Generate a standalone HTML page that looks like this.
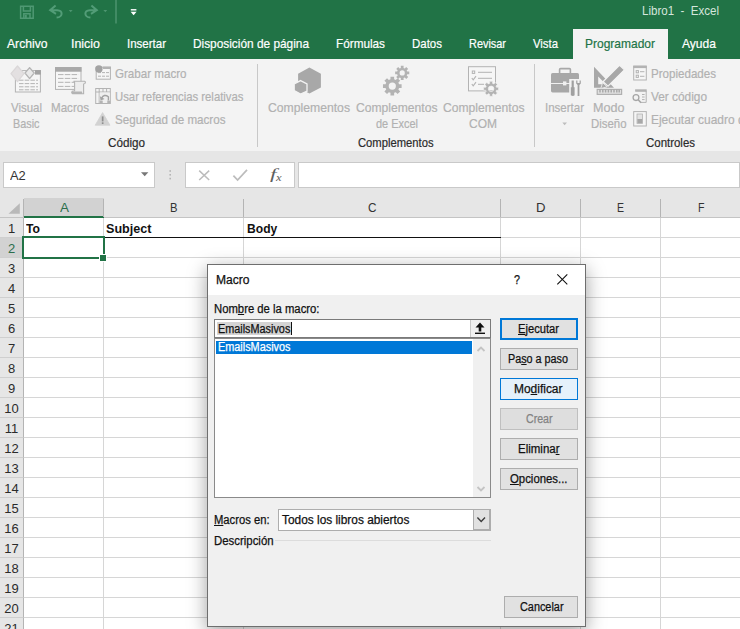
<!DOCTYPE html>
<html lang="es">
<head>
<meta charset="utf-8">
<title>Libro1 - Excel</title>
<style>
*{box-sizing:border-box;margin:0;padding:0}
html,body{width:740px;height:629px;overflow:hidden;background:#fff}
body{font-family:"Liberation Sans",sans-serif;font-size:12px;color:#222;position:relative}
.abs{position:absolute;white-space:nowrap;transform-origin:0 0}
svg{position:absolute;overflow:visible}
#top{left:0;top:0;width:740px;height:59px;background:#217346}
.tab{color:#fff;font-size:13px;top:36.4px;-webkit-text-stroke:0.2px currentColor}
#ptab{left:573px;top:29px;width:95px;height:30px;background:#f3f3f3}
#ribbon{left:0;top:59px;width:740px;height:92px;background:#f3f3f3}
#band{left:0;top:151px;width:740px;height:47px;background:#e6e6e6}
.gl{color:#b1b1b1;font-size:13px;-webkit-text-stroke:0.2px currentColor}
.gt{color:#2b2b2b;font-size:12px;top:136.1px;-webkit-text-stroke:0.2px currentColor}
.sep{width:1px;background:#c8c8c8;top:64px;height:83px}
.box{background:#fff;border:1px solid #c9c9c9}
#sheet{left:0;top:198px;width:740px;height:431px;background:#fff}
.ch{top:198px;height:20px;background:#e6e6e6;border-bottom:1px solid #c4c4c4}
.chs{top:199px;width:1px;height:18px;background:#b4b4b4}
.cl{top:200.2px;font-size:13px;color:#333}
.rh{left:0;width:24px;height:20px;background:#e6e6e6;border-right:1px solid #b4b4b4;border-bottom:1px solid #cfcfcf;text-align:center;font-size:13px;color:#2b2b2b;line-height:21px}
.rh span{display:inline-block}
.rsel{background:#d2d2d2;color:#2c6e4c}
.vl{width:1px;background:#d6d6d6;top:218px;height:411px}
.hl{height:1px;background:#d6d6d6;left:24px;width:716px}
.cell{font-weight:bold;font-size:13px;color:#111;top:221.2px}
#dlg{left:207px;top:264px;width:379px;height:363px;background:#f0f0f0;border:1px solid #6e6e6e;box-shadow:0 5px 18px rgba(0,0,0,.38)}
#dtitle{left:208px;top:265px;width:377px;height:30px;background:#fff}
.dt{font-size:12px;color:#111;-webkit-text-stroke:0.25px currentColor}
.btn{left:500px;width:78px;height:22px;background:#e1e1e1;border:1px solid #adadad}
.bt{font-size:12px;color:#111;-webkit-text-stroke:0.25px currentColor}
</style>
</head>
<body>
<div id="top" class="abs"></div>
<div id="ptab" class="abs"></div>
<div class="abs" style="left:642px;top:3.2px;color:#d5e6dc;font-size:13px;--w:77px;transform:scaleX(0.8881)">Libro1&nbsp; -&nbsp; Excel</div>
<div class="abs tab" style="left:7px;--w:40.5px;transform:scaleX(0.9341)">Archivo</div>
<div class="abs tab" style="left:71px;--w:29px;transform:scaleX(0.9552)">Inicio</div>
<div class="abs tab" style="left:127px;--w:39px;transform:scaleX(0.8848)">Insertar</div>
<div class="abs tab" style="left:193px;--w:116px;transform:scaleX(0.9119)">Disposición de página</div>
<div class="abs tab" style="left:336px;--w:49px;transform:scaleX(0.9043)">Fórmulas</div>
<div class="abs tab" style="left:412px;--w:30px;transform:scaleX(0.8832)">Datos</div>
<div class="abs tab" style="left:469px;--w:37px;transform:scaleX(0.8394)">Revisar</div>
<div class="abs tab" style="left:533px;--w:25px;transform:scaleX(0.8719)">Vista</div>
<div class="abs tab" style="left:585px;color:#217346;--w:70px;transform:scaleX(0.9226)">Programador</div>
<div class="abs tab" style="left:682px;--w:34px;transform:scaleX(0.9279)">Ayuda</div>

<div id="ribbon" class="abs"></div>
<div id="band" class="abs"></div>
<svg style="left:0;top:0" width="740" height="160" viewBox="0 0 740 160">
<g fill="none" stroke="#4f9873" stroke-width="1.5"><path d="M20.6 6.3H33.2V18.2H20.6Z"/><path d="M23.4 6.3V11H30.4V6.3"/><path d="M23.8 18.2V13.8H30V18.2"/></g><rect x="24.8" y="14.8" width="2" height="3.2" fill="#4f9873"/>
<path d="M55.6 5.6L50.2 10.2L56 13.8M50.8 10.2H57.2Q61.8 10.4 61.6 14Q61.2 17.2 56.6 17.6" fill="none" stroke="#529c77" stroke-width="2"/><path d="M68.8 10H72.6L70.7 12.3Z" fill="#4d9570"/>
<path d="M91.4 5.6L96.8 10.2L91 13.8M96.2 10.2H89.8Q85.2 10.4 85.4 14Q85.8 17.2 90.4 17.6" fill="none" stroke="#529c77" stroke-width="2"/><path d="M103.4 10H107.2L105.3 12.3Z" fill="#4d9570"/>
<rect x="115.5" y="0" width="1" height="23.5" fill="#63a381"/>
<rect x="130.8" y="9.1" width="5.6" height="1.4" fill="#fff"/><path d="M130.6 11.8H136.6L133.6 15.2Z" fill="#fff"/>
<rect x="15.4" y="70.6" width="25" height="21.4" fill="#f6f6f6" stroke="#b3b3b3" stroke-width="1"/>
<rect x="35" y="70.1" width="5.9" height="4.5" fill="#a3a3a3"/>
<path d="M19 80.2H38" stroke="#b3b3b3" stroke-width="1" stroke-dasharray="4.5 1.2"/>
<path d="M19 83.6H38" stroke="#b3b3b3" stroke-width="1" stroke-dasharray="4.5 1.2"/>
<path d="M19 86.8H38" stroke="#b3b3b3" stroke-width="1" stroke-dasharray="4.5 1.2"/>
<path d="M19 89.8H38" stroke="#b3b3b3" stroke-width="1" stroke-dasharray="4.5 1.2"/>
<path d="M17.5 66L24 73.6L17.5 81.6L11 73.6Z" fill="#e3e0e1" stroke="#dad7d8" stroke-width="1.2" stroke-linejoin="round"/>
<path d="M29.6 67.6L34.2 73L29.6 78.6L25 73Z" fill="#e9e9e9" stroke="#b4b4b4" stroke-width="1.3" stroke-linejoin="round"/>
<rect x="55.5" y="67.6" width="25.5" height="21.8" fill="#f6f6f6" stroke="#b3b3b3" stroke-width="1"/>
<rect x="55" y="67.1" width="26.5" height="4.6" fill="#a9a9a9"/>
<path d="M58 74.6H78.5" stroke="#b3b3b3" stroke-width="1" stroke-dasharray="5.5 1.3"/>
<path d="M58 78.4H78.5" stroke="#b3b3b3" stroke-width="1" stroke-dasharray="5.5 1.3"/>
<path d="M58 82.3H78.5" stroke="#b3b3b3" stroke-width="1" stroke-dasharray="5.5 1.3"/>
<path d="M58 86.4H78.5" stroke="#b3b3b3" stroke-width="1" stroke-dasharray="5.5 1.3"/>
<path d="M73.5 81.3H84.6Q86 82 85 83.4L83.6 84V93.8H72.6Q71 93 72.2 91.2L74.6 90.8V82.4Q74.2 81.5 73.5 81.3Z" fill="#ededed" stroke="#b3b3b3" stroke-width="1.1"/>
<path d="M72.2 91.4H81.8Q82.8 92.6 81.8 93.9H72.4Q71.2 92.6 72.2 91.4Z" fill="#b3b3b3"/>
<rect x="96.2" y="67.2" width="14.2" height="12" fill="#f6f6f6" stroke="#b3b3b3" stroke-width="1"/>
<rect x="103" y="66.6" width="7.9" height="2.4" fill="#b3b3b3"/>
<path d="M98 72.6H109.5" stroke="#b3b3b3" stroke-width="1" stroke-dasharray="3 1"/>
<path d="M98 76.2H109.5" stroke="#b3b3b3" stroke-width="1" stroke-dasharray="3 1"/>
<circle cx="98.9" cy="68.9" r="3.7" fill="#a3a3a3"/>
<g fill="none" stroke="#b3b3b3" stroke-width="1"><rect x="95.7" y="88.5" width="14.6" height="15"/><path d="M95.7 92H110.3M99.2 88.5V103.5M103 88.5V92M106.6 88.5V92"/></g>
<rect x="99.7" y="92.5" width="10.1" height="10.5" fill="#efefef"/>
<path d="M101.4 98.6Q104 93.4 108.4 96.8V100.5" fill="none" stroke="#a3a3a3" stroke-width="1.4"/><path d="M99.9 96.2L100.6 100.6L104.6 99Z" fill="#a3a3a3"/>
<rect x="99.7" y="100.6" width="3" height="2.9" fill="#b3b3b3"/><rect x="107.3" y="100.6" width="3" height="2.9" fill="#b3b3b3"/>
<path d="M102.6 112.6L110 125.2H95.2Z" fill="#d2d2d2" stroke="#d2d2d2" stroke-width="0.8" stroke-linejoin="round"/><rect x="101.8" y="116.4" width="1.7" height="5" fill="#8f8f8f"/><rect x="101.8" y="122.3" width="1.7" height="1.7" fill="#8f8f8f"/>
<path d="M309.4 67.4L320.9 73.7V87.5L309.4 93.4L298.1 87.5V73.7Z" fill="#a8a8a8"/>
<path d="M300.6 80.6L307 84V91.2L300.6 94L294.2 90.6V84Z" fill="#a8a8a8" stroke="#f3f3f3" stroke-width="1.3"/>
<path fill-rule="evenodd" fill="#b3b3b3" d="M399.06 84.27L401.62 84.25L401.62 87.95L399.06 87.93L398.37 89.58L400.20 91.38L397.58 94.00L395.78 92.17L394.13 92.86L394.15 95.42L390.45 95.42L390.47 92.86L388.82 92.17L387.02 94.00L384.40 91.38L386.23 89.58L385.54 87.93L382.98 87.95L382.98 84.25L385.54 84.27L386.23 82.62L384.40 80.82L387.02 78.20L388.82 80.03L390.47 79.34L390.45 76.78L394.15 76.78L394.13 79.34L395.78 80.03L397.58 78.20L400.20 80.82L398.37 82.62ZM388.70 86.10a3.60 3.60 0 1 0 7.20 0a3.60 3.60 0 1 0 -7.20 0Z"/>
<path fill-rule="evenodd" fill="#b3b3b3" d="M407.22 71.54L409.26 71.50L409.26 74.30L407.22 74.26L406.71 75.49L408.19 76.90L406.20 78.89L404.79 77.41L403.56 77.92L403.60 79.96L400.80 79.96L400.84 77.92L399.61 77.41L398.20 78.89L396.21 76.90L397.69 75.49L397.18 74.26L395.14 74.30L395.14 71.50L397.18 71.54L397.69 70.31L396.21 68.90L398.20 66.91L399.61 68.39L400.84 67.88L400.80 65.84L403.60 65.84L403.56 67.88L404.79 68.39L406.20 66.91L408.19 68.90L406.71 70.31ZM399.60 72.90a2.60 2.60 0 1 0 5.20 0a2.60 2.60 0 1 0 -5.20 0Z"/>
<rect x="468.5" y="66.7" width="27" height="24.2" fill="#f6f6f6" stroke="#b3b3b3" stroke-width="1"/>
<g fill="none" stroke="#b3b3b3" stroke-width="1"><rect x="472.3" y="71" width="2.4" height="2.4"/><path d="M478 72.3H492M478 78.3H492M478 84.3H484"/><path d="M471.8 78L473.2 79.8L476 76.2M471.8 84L473.2 85.8L476 82.2" stroke-width="1.1"/></g>
<path fill-rule="evenodd" fill="#b3b3b3" stroke="#f3f3f3" stroke-width="0.6" d="M496.50 87.33L498.55 87.32L498.55 90.28L496.50 90.27L495.96 91.58L497.42 93.02L495.32 95.12L493.88 93.66L492.57 94.20L492.58 96.25L489.62 96.25L489.63 94.20L488.32 93.66L486.88 95.12L484.78 93.02L486.24 91.58L485.70 90.27L483.65 90.28L483.65 87.32L485.70 87.33L486.24 86.02L484.78 84.58L486.88 82.48L488.32 83.94L489.63 83.40L489.62 81.35L492.58 81.35L492.57 83.40L493.88 83.94L495.32 82.48L497.42 84.58L495.96 86.02ZM488.30 88.80a2.80 2.80 0 1 0 5.60 0a2.80 2.80 0 1 0 -5.60 0Z"/>
<path d="M559.6 73V69.6Q559.6 68.6 560.6 68.6H569.4Q570.4 68.6 570.4 69.6V73" fill="none" stroke="#a8a8a8" stroke-width="1.6"/>
<path d="M552.6 73H577.4Q579 73 579 74.6V90.8Q579 92.4 577.4 92.4H552.6Q551 92.4 551 90.8V74.6Q551 73 552.6 73Z" fill="#a8a8a8"/>
<rect x="551" y="83" width="28" height="1" fill="#f0f0f0"/><rect x="563" y="81.4" width="3.4" height="4" fill="#f0f0f0"/>
<rect x="569.2" y="79" width="13" height="18" fill="#f3f3f3"/>
<path d="M571.6 80.6H573.8V87.2H574.6V95.2Q573.2 96.6 570.8 95.2V87.2H571.6Z" fill="#a0a0a0"/>
<path d="M576.2 80.4V83.4L577.6 85V96H579.4V85L580.8 83.4V80.4H579.6V83H577.4V80.4Z" fill="#a0a0a0"/>
<path d="M562.3 122.6H567L564.65 125.2Z" fill="#bdbdbd"/>
<path fill-rule="evenodd" d="M594 66.8L614 87.8H594ZM598.2 76.4V84.2H605.8Z" fill="#a8a8a8"/>
<path d="M619.6 65.2L624.4 69.8L608 86.2L603.2 81.6Z" fill="#a8a8a8" stroke="#f3f3f3" stroke-width="1.2"/>
<path d="M602.6 82.6L607 86.8L600.8 88.6Z" fill="#a8a8a8" stroke="#f3f3f3" stroke-width="0.8"/>
<rect x="597.2" y="89.4" width="24.4" height="5" fill="#e0e0e0" stroke="#b0b0b0" stroke-width="1.2"/>
<path d="M600 89.6V92.6M602.8 89.6V92.6M605.6 89.6V92.6M608.4 89.6V92.6M611.2 89.6V92.6M614 89.6V92.6M616.8 89.6V92.6M619.2 89.6V92.6" stroke="#a8a8a8" stroke-width="1.5"/>
<rect x="633.7" y="66.2" width="12.6" height="13.8" fill="#f6f6f6" stroke="#b3b3b3" stroke-width="1"/><rect x="633.2" y="65.7" width="13.6" height="2.4" fill="#b3b3b3"/>
<g fill="none" stroke="#b3b3b3" stroke-width="1"><rect x="636.2" y="70.6" width="2.2" height="2.2"/><rect x="636.2" y="75.2" width="2.2" height="2.2"/><path d="M640 71.7H644.4M640 76.3H644.4"/></g>
<path d="M635.6 91H646.2V102.4H641" fill="none" stroke="#b3b3b3" stroke-width="1"/><rect x="635.1" y="89.3" width="11.6" height="2.3" fill="#b3b3b3"/><path d="M642 94.5H644.6M642 97H644.6M642 99.6H644.6" stroke="#b3b3b3" stroke-width="1"/>
<circle cx="636" cy="97.6" r="2.9" fill="#f3f3f3" stroke="#a6a6a6" stroke-width="1.3"/><path d="M638.2 99.8L641 102.8" stroke="#a6a6a6" stroke-width="1.6"/>
<rect x="633.7" y="111.6" width="12.6" height="14.4" fill="#f6f6f6" stroke="#b3b3b3" stroke-width="1"/><rect x="637" y="114" width="5.6" height="9.4" fill="#e3e3e3" stroke="#b3b3b3" stroke-width="0.8"/><rect x="637.4" y="119" width="4.8" height="4" fill="#a8a8a8"/>
</svg>

<div class="abs gl" style="left:11px;top:100px;--w:31px;transform:scaleX(0.8810)">Visual</div>
<div class="abs gl" style="left:13px;top:116.2px;--w:26.5px;transform:scaleX(0.8334)">Basic</div>
<div class="abs gl" style="left:51px;top:100px;--w:38px;transform:scaleX(0.8915)">Macros</div>
<div class="abs gl" style="left:114.5px;top:66.2px;--w:71.5px;transform:scaleX(0.8915)">Grabar macro</div>
<div class="abs gl" style="left:114.5px;top:89.2px;--w:128.5px;transform:scaleX(0.8718)">Usar referencias relativas</div>
<div class="abs gl" style="left:114.5px;top:112.2px;--w:110.5px;transform:scaleX(0.8942)">Seguridad de macros</div>
<div class="abs gt" style="left:108px;--w:37px;transform:scaleX(0.9729)">Código</div>
<div class="abs sep" style="left:257px"></div>
<div class="abs gl" style="left:268px;top:100px;--w:82px;transform:scaleX(0.9378)">Complementos</div>
<div class="abs gl" style="left:355.5px;top:100px;--w:81.5px;transform:scaleX(0.9321)">Complementos</div>
<div class="abs gl" style="left:375.5px;top:116.2px;--w:42px;transform:scaleX(0.8421)">de Excel</div>
<div class="abs gl" style="left:442.5px;top:100px;--w:81.5px;transform:scaleX(0.9321)">Complementos</div>
<div class="abs gl" style="left:469px;top:116.2px;--w:28px;transform:scaleX(0.9228)">COM</div>
<div class="abs gt" style="left:357.5px;--w:75.5px;transform:scaleX(0.9355)">Complementos</div>
<div class="abs sep" style="left:534px"></div>
<div class="abs gl" style="left:545px;top:100px;--w:39px;transform:scaleX(0.8848)">Insertar</div>
<div class="abs gl" style="left:592.5px;top:100px;--w:31.5px;transform:scaleX(0.9683)">Modo</div>
<div class="abs gl" style="left:590.5px;top:116.2px;--w:35.5px;transform:scaleX(0.8772)">Diseño</div>
<div class="abs gl" style="left:651px;top:66.2px;--w:65px;transform:scaleX(0.8904)">Propiedades</div>
<div class="abs gl" style="left:651px;top:89.2px;--w:56px;transform:scaleX(0.9115)">Ver código</div>
<div class="abs gl" style="left:651px;top:112.2px;--w:142px;transform:scaleX(0.9181)">Ejecutar cuadro de diálogo</div>
<div class="abs gt" style="left:645.5px;--w:49px;transform:scaleX(0.9541)">Controles</div>

<!-- formula bar -->
<div class="abs box" style="left:3px;top:162px;width:152px;height:26px"></div>
<div class="abs" style="left:10px;top:167.7px;font-size:13px;color:#333;--w:15.75px;transform:scaleX(0.9902)">A2</div>
<div class="abs box" style="left:185px;top:162px;width:110px;height:26px"></div>
<div class="abs box" style="left:298px;top:162px;width:442px;height:26px"></div>
<svg style="left:0;top:150px" width="320" height="70" viewBox="0 150 320 70">
<path d="M141 172.2H148.4L144.7 176.2Z" fill="#777"/>
<rect x="169.4" y="170.2" width="1.6" height="1.6" fill="#b5b5b5"/><rect x="169.4" y="174" width="1.6" height="1.6" fill="#b5b5b5"/><rect x="169.4" y="177.8" width="1.6" height="1.6" fill="#b5b5b5"/>
<path d="M199.2 170.6L209.2 180M209.2 170.6L199.2 180" stroke="#bcbcbc" stroke-width="1.5" fill="none"/>
<path d="M233.4 175.6L237.6 180L247 169.8" stroke="#bcbcbc" stroke-width="1.7" fill="none"/>
</svg>
<div class="abs" style="left:270px;top:165.6px;font-family:'Liberation Serif',serif;font-style:italic;font-size:15px;color:#5e5e5e;--w:6.5px;transform:scaleX(1.5581)">f</div>
<div class="abs" style="left:276.2px;top:171.6px;font-family:'Liberation Serif',serif;font-style:italic;font-size:10px;color:#5e5e5e;--w:5.6px;transform:scaleX(1.2575)">x</div>

<!-- sheet -->
<div id="sheet" class="abs"></div>
<div class="abs ch" style="left:0;width:740px"></div>
<div class="abs" style="left:24px;top:198px;width:80px;height:20px;background:#d2d2d2;border-bottom:2px solid #217346"></div>
<svg style="left:8px;top:203px" width="12" height="11" viewBox="0 0 12 11"><path d="M0.5 10.8H11.8V0.3Z" fill="#b9b9b9"/></svg>
<div class="abs chs" style="left:23px"></div>
<div class="abs chs" style="left:103px"></div>
<div class="abs chs" style="left:243px"></div>
<div class="abs chs" style="left:500px"></div>
<div class="abs chs" style="left:580px"></div>
<div class="abs chs" style="left:660px"></div>
<div class="abs cl" style="left:59.5px;color:#2c6e4c;--w:9px;transform:scaleX(1.0378)">A</div>
<div class="abs cl" style="left:169.5px;--w:7.5px;transform:scaleX(0.8649)">B</div>
<div class="abs cl" style="left:367.5px;--w:8.5px;transform:scaleX(0.9052)">C</div>
<div class="abs cl" style="left:535.5px;--w:9.5px;transform:scaleX(1.0116)">D</div>
<div class="abs cl" style="left:616.5px;--w:7px;transform:scaleX(0.8072)">E</div>
<div class="abs cl" style="left:697.5px;--w:6.5px;transform:scaleX(0.8173)">F</div>
<div class="abs rh" style="top:218px"><span>1</span></div>
<div class="abs rh rsel" style="top:238px"><span>2</span></div>
<div class="abs rh" style="top:258px"><span>3</span></div>
<div class="abs rh" style="top:278px"><span>4</span></div>
<div class="abs rh" style="top:298px"><span>5</span></div>
<div class="abs rh" style="top:318px"><span>6</span></div>
<div class="abs rh" style="top:338px"><span>7</span></div>
<div class="abs rh" style="top:358px"><span>8</span></div>
<div class="abs rh" style="top:378px"><span>9</span></div>
<div class="abs rh" style="top:398px"><span>10</span></div>
<div class="abs rh" style="top:418px"><span>11</span></div>
<div class="abs rh" style="top:438px"><span>12</span></div>
<div class="abs rh" style="top:458px"><span>13</span></div>
<div class="abs rh" style="top:478px"><span>14</span></div>
<div class="abs rh" style="top:498px"><span>15</span></div>
<div class="abs rh" style="top:518px"><span>16</span></div>
<div class="abs rh" style="top:538px"><span>17</span></div>
<div class="abs rh" style="top:558px"><span>18</span></div>
<div class="abs rh" style="top:578px"><span>19</span></div>
<div class="abs rh" style="top:598px"><span>20</span></div>
<div class="abs rh" style="top:618px"><span>21</span></div>
<div class="abs hl" style="top:237px"></div>
<div class="abs hl" style="top:257px"></div>
<div class="abs hl" style="top:277px"></div>
<div class="abs hl" style="top:297px"></div>
<div class="abs hl" style="top:317px"></div>
<div class="abs hl" style="top:337px"></div>
<div class="abs hl" style="top:357px"></div>
<div class="abs hl" style="top:377px"></div>
<div class="abs hl" style="top:397px"></div>
<div class="abs hl" style="top:417px"></div>
<div class="abs hl" style="top:437px"></div>
<div class="abs hl" style="top:457px"></div>
<div class="abs hl" style="top:477px"></div>
<div class="abs hl" style="top:497px"></div>
<div class="abs hl" style="top:517px"></div>
<div class="abs hl" style="top:537px"></div>
<div class="abs hl" style="top:557px"></div>
<div class="abs hl" style="top:577px"></div>
<div class="abs hl" style="top:597px"></div>
<div class="abs hl" style="top:617px"></div>
<div class="abs hl" style="top:637px"></div>
<div class="abs vl" style="left:103px"></div>
<div class="abs vl" style="left:243px"></div>
<div class="abs vl" style="left:500px"></div>
<div class="abs vl" style="left:580px"></div>
<div class="abs vl" style="left:660px"></div>
<div class="abs cell" style="left:26px;--w:14px;transform:scaleX(0.9382)">To</div>
<div class="abs cell" style="left:106px;--w:45.5px;transform:scaleX(0.9687)">Subject</div>
<div class="abs cell" style="left:246.75px;--w:30.25px;transform:scaleX(0.9308)">Body</div>
<div class="abs" style="left:24px;top:237px;width:477px;height:1px;background:#111"></div>
<div class="abs" style="left:22px;top:236px;width:82.5px;height:22.8px;border:2px solid #217346"></div>
<div class="abs" style="left:99px;top:254px;width:6px;height:5.5px;background:#217346;border:1px solid #fff;box-sizing:content-box"></div>

<!-- dialog -->
<div id="dlg" class="abs"></div>
<div id="dtitle" class="abs"></div>
<div class="abs dt" style="left:216px;top:273.1px;--w:33.5px;transform:scaleX(1.0047)">Macro</div>
<div class="abs dt" style="left:514px;top:272.2px;font-size:13px;--w:6px;transform:scaleX(0.8294)">?</div>
<svg style="left:557px;top:274px" width="11" height="11" viewBox="0 0 11 11"><path d="M0.3 0.3L10.3 10.3M10.3 0.3L0.3 10.3" stroke="#111" stroke-width="1.1" fill="none"/></svg>
<div class="abs dt" style="left:213.8px;top:302px;--w:105.5px;transform:scaleX(0.9413)">Nom<u>b</u>re de la macro:</div>
<div class="abs" style="left:214px;top:319px;width:277px;height:19px;background:#fff;border:1px solid #7a7a7a"></div>
<div class="abs" style="left:217px;top:322px;width:74px;height:13px;background:#d4d4d4"></div>
<div class="abs dt" style="left:218.2px;top:322.1px;--w:72.3px;transform:scaleX(0.9036)">EmailsMasivos</div>
<div class="abs" style="left:291px;top:322px;width:1px;height:13px;background:#111"></div>
<div class="abs" style="left:470px;top:320px;width:20px;height:17px;background:#f0f0f0;border-left:1px solid #c8c8c8"></div>
<svg style="left:474px;top:322px" width="12" height="13" viewBox="0 0 12 13"><path d="M6 0.5L1.5 5.5H4.7V9.5H7.3V5.5H10.5Z" fill="#111"/><rect x="1" y="10.6" width="10" height="1.4" fill="#111"/></svg>
<div class="abs" style="left:214px;top:338px;width:277px;height:160px;background:#fff;border:1px solid #8a8a8a"></div>
<div class="abs" style="left:473px;top:339px;width:17px;height:158px;background:#f0f0f0"></div>
<svg style="left:477px;top:346px" width="8" height="6" viewBox="0 0 8 6"><path d="M0.5 5L4 1.5L7.5 5" stroke="#c4c4c4" stroke-width="1.8" fill="none"/></svg>
<svg style="left:477px;top:485.5px" width="8" height="6" viewBox="0 0 8 6"><path d="M0.5 1L4 4.5L7.5 1" stroke="#c4c4c4" stroke-width="1.8" fill="none"/></svg>
<div class="abs" style="left:216px;top:341px;width:256px;height:13px;background:#0078d7"></div>
<div class="abs dt" style="left:218px;top:339.6px;color:#fff;--w:72.5px;transform:scaleX(0.9061)">EmailsMasivos</div>

<div class="abs btn" style="top:318px;border:2px solid #0078d7"></div>
<div class="abs btn" style="top:348px"></div>
<div class="abs btn" style="top:378px;background:#e5f1fb;border-color:#0078d7"></div>
<div class="abs btn" style="top:408px;background:#dedede;border-color:#bfbfbf"></div>
<div class="abs btn" style="top:438px"></div>
<div class="abs btn" style="top:468px"></div>
<div class="abs btn" style="top:596px;left:504px;width:74px"></div>
<div class="abs bt" style="left:518px;top:322.1px;--w:41px;transform:scaleX(0.9308)"><u>E</u>jecutar</div>
<div class="abs bt" style="left:508px;top:352.1px;--w:60px;transform:scaleX(0.8991)">Pa<u>s</u>o a paso</div>
<div class="abs bt" style="left:514px;top:382.1px;--w:48.5px;transform:scaleX(0.9958)">Mo<u>d</u>ificar</div>
<div class="abs bt" style="left:525.5px;top:412.1px;color:#838383;--w:26.5px;transform:scaleX(0.8829)">Crear</div>
<div class="abs bt" style="left:518px;top:442.1px;--w:41.5px;transform:scaleX(0.9571)">Elimina<u>r</u></div>
<div class="abs bt" style="left:510px;top:472.1px;--w:57.5px;transform:scaleX(0.9470)"><u>O</u>pciones...</div>
<div class="abs bt" style="left:519.5px;top:600.1px;--w:43.5px;transform:scaleX(0.9057)">Cancelar</div>

<div class="abs dt" style="left:213.7px;top:513.1px;--w:55.6px;transform:scaleX(0.9367)"><u>M</u>acros en:</div>
<div class="abs" style="left:278px;top:509px;width:213px;height:22px;background:#fff;border:1px solid #adadad"></div>
<div class="abs" style="left:473px;top:509px;width:18px;height:22px;background:#e1e1e1;border:1px solid #adadad;border-right-width:2px;border-bottom-width:2px"></div>
<svg style="left:477px;top:517px" width="9" height="6" viewBox="0 0 9 6"><path d="M0.4 0.6L4.2 4.6L8 0.6" stroke="#3c3c3c" stroke-width="1.4" fill="none"/></svg>
<div class="abs dt" style="left:282.4px;top:513.1px;--w:127.4px;transform:scaleX(0.9896)">Todos los libros abiertos</div>
<div class="abs dt" style="left:213.7px;top:534.1px;--w:59.6px;transform:scaleX(0.9505)">Descripción</div>
<div class="abs" style="left:275px;top:540px;width:216px;height:1px;background:#dcdcdc"></div>
</body>
</html>
